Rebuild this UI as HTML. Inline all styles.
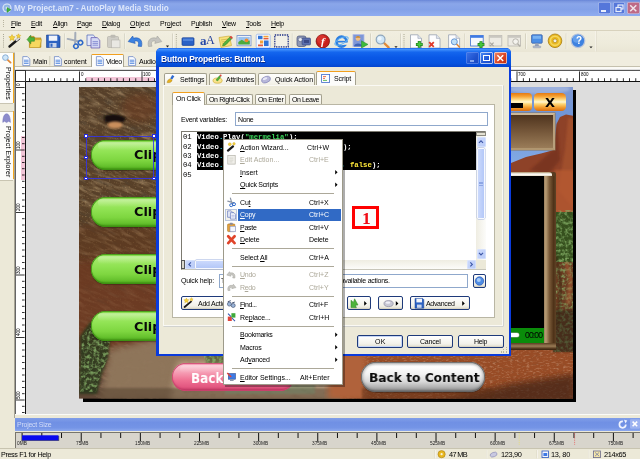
<!DOCTYPE html>
<html lang="en"><head><meta charset="utf-8"><title>AutoPlay Media Studio</title>
<style>
html,body{margin:0;padding:0}
body{width:640px;height:459px;overflow:hidden;position:relative;background:#ECE9D8;font-family:"Liberation Sans",sans-serif;font-size:7px;color:#000}
div,span.t,svg{position:absolute}
span.t{white-space:nowrap;display:block;will-change:transform}
u{text-decoration-thickness:0.6px;text-underline-offset:0.6px}
</style></head><body>

<div style="left:0px;top:0px;width:640px;height:15.6px;background:linear-gradient(#6886D8 0%,#7C98E0 10%,#8AA6EA 24%,#83A1E8 60%,#8FACF0 100%)"></div>
<svg style="left:2px;top:3.4px" width="10" height="10" viewBox="0 0 10 10"><circle cx="5" cy="5" r="4.6" fill="#dfe8f6"/><circle cx="5" cy="5" r="3.4" fill="#8fb4e4"/><circle cx="5" cy="5" r="1.3" fill="#eef2fa"/><path d="M5 4.4 L9 6.8 L5 9.4Z" fill="#3fb53a" stroke="#1f7f22" stroke-width=".4"/></svg>
<span class="t" style="left:13.5px;top:3.97px;height:10.66px;line-height:10.66px;font-size:8.2px;color:#DCE6FA;font-weight:bold;letter-spacing:-0.026px;">My Project.am7 - AutoPlay Media Studio</span>
<div style="left:598px;top:1.5px;width:12.5px;height:12.5px;background:linear-gradient(135deg,#5577DA,#5577DA);border-radius:2px;box-shadow:inset 0 0 0 0.6px #c8d4f4"></div>
<div style="left:612.5px;top:1.5px;width:12.5px;height:12.5px;background:linear-gradient(135deg,#5577DA,#5577DA);border-radius:2px;box-shadow:inset 0 0 0 0.6px #c8d4f4"></div>
<div style="left:627px;top:1.5px;width:12.5px;height:12.5px;background:linear-gradient(135deg,#BE6A86,#BE6A86);border-radius:2px;box-shadow:inset 0 0 0 0.6px #c8d4f4"></div>
<div style="left:601px;top:10px;width:5px;height:1.6px;background:#e8eefc"></div>
<svg style="left:612.5px;top:1.5px" width="12.5" height="12.5" viewBox="0 0 12.5 12.5"><rect x="5" y="3" width="5" height="4" fill="none" stroke="#e8eefc" stroke-width="1.2"/><rect x="3" y="5.5" width="5" height="4" fill="#5577DA" stroke="#e8eefc" stroke-width="1.2"/></svg>
<svg style="left:627px;top:1.5px" width="12.5" height="12.5" viewBox="0 0 12.5 12.5"><path d="M3.2 3.2 L9.3 9.3 M9.3 3.2 L3.2 9.3" stroke="#f0e4ea" stroke-width="1.5"/></svg>
<div style="left:0px;top:15.6px;width:640px;height:14.4px;background:#EFECDE"></div>
<div style="left:0px;top:30px;width:640px;height:0.7px;background:#D8D2BD"></div>
<div style="left:3px;top:19.5px;width:1px;height:1px;background:#B8B4A0"></div>
<div style="left:3px;top:21.7px;width:1px;height:1px;background:#B8B4A0"></div>
<div style="left:3px;top:23.9px;width:1px;height:1px;background:#B8B4A0"></div>
<div style="left:3px;top:26.1px;width:1px;height:1px;background:#B8B4A0"></div>
<span class="t" style="left:11px;top:19.15px;height:9.1px;line-height:9.1px;font-size:7px;color:#000;letter-spacing:-0.320px;"><u>F</u>ile</span>
<span class="t" style="left:31px;top:19.15px;height:9.1px;line-height:9.1px;font-size:7px;color:#000;letter-spacing:-0.328px;"><u>E</u>dit</span>
<span class="t" style="left:52.5px;top:19.15px;height:9.1px;line-height:9.1px;font-size:7px;color:#000;letter-spacing:-0.213px;"><u>A</u>lign</span>
<span class="t" style="left:77px;top:19.15px;height:9.1px;line-height:9.1px;font-size:7px;color:#000;letter-spacing:-0.337px;"><u>P</u>age</span>
<span class="t" style="left:102px;top:19.15px;height:9.1px;line-height:9.1px;font-size:7px;color:#000;letter-spacing:-0.308px;"><u>D</u>ialog</span>
<span class="t" style="left:130px;top:19.15px;height:9.1px;line-height:9.1px;font-size:7px;color:#000;letter-spacing:-0.039px;"><u>O</u>bject</span>
<span class="t" style="left:159.5px;top:19.15px;height:9.1px;line-height:9.1px;font-size:7px;color:#000;letter-spacing:-0.112px;">Pr<u>o</u>ject</span>
<span class="t" style="left:191px;top:19.15px;height:9.1px;line-height:9.1px;font-size:7px;color:#000;letter-spacing:-0.280px;">P<u>u</u>blish</span>
<span class="t" style="left:222px;top:19.15px;height:9.1px;line-height:9.1px;font-size:7px;color:#000;letter-spacing:-0.324px;"><u>V</u>iew</span>
<span class="t" style="left:245.75px;top:19.15px;height:9.1px;line-height:9.1px;font-size:7px;color:#000;letter-spacing:-0.268px;"><u>T</u>ools</span>
<span class="t" style="left:271px;top:19.15px;height:9.1px;line-height:9.1px;font-size:7px;color:#000;letter-spacing:-0.412px;"><u>H</u>elp</span>
<div style="left:0px;top:30.7px;width:640px;height:21.4px;background:linear-gradient(#F1EEE0,#EEEBDB 60%,#EAE6D5)"></div>
<div style="left:0px;top:51.6px;width:640px;height:0.8px;background:#D2CEBB"></div>
<svg style="left:0;top:0" width="640" height="459" viewBox="0 0 640 459"><rect x="3" y="34.0" width="1" height="1" fill="#A9A693"/><rect x="3" y="36.1" width="1" height="1" fill="#A9A693"/><rect x="3" y="38.2" width="1" height="1" fill="#A9A693"/><rect x="3" y="40.3" width="1" height="1" fill="#A9A693"/><rect x="3" y="42.4" width="1" height="1" fill="#A9A693"/><rect x="3" y="44.5" width="1" height="1" fill="#A9A693"/><rect x="3" y="46.6" width="1" height="1" fill="#A9A693"/><path d="M9.5 46.5 L19 38.5" stroke="#1a1a1a" stroke-width="2.4" stroke-linecap="round"/><path d="M16.5 40.2 L19.4 37.8" stroke="#ddd" stroke-width="2" stroke-linecap="round"/><path d="M12 34.5 l1 2 l2.2 .3 l-1.6 1.5 l.4 2.2 l-2-1.1 l-2 1.1 l.4-2.2 l-1.6-1.5 l2.2-.3z" fill="#F4D23C" stroke="#C79A10" stroke-width=".4"/><path d="M18.5 33.8 l.7 1.4 l1.6 .2 l-1.1 1.1 l.3 1.6 l-1.5-.8 l-1.4 .8 l.3-1.6 l-1.2-1.1 l1.6-.2z" fill="#F4D23C" stroke="#C79A10" stroke-width=".4"/><path d="M29.4 36.4 h4.6 l1.3 1.5 h5.6 v9.4 h-11.5z" fill="#DDAA28" stroke="#A87C10" stroke-width=".6"/><path d="M31.4 39.6 h10 l-1.6 7.9 h-10.4z" fill="#F6D860" stroke="#B88E1C" stroke-width=".5"/><path d="M27 39.6 l3.8-4.4 v2.4 h3.6 v3.6 h-3.6 v2.6z" fill="#4DB33B" stroke="#2B7E22" stroke-width=".5"/><path d="M46.5 35 h12 l1.5 1.5 v11 h-13.5z" fill="#2C62C2" stroke="#173E8E" stroke-width=".6"/><rect x="48.8" y="35.6" width="8.5" height="5.2" fill="#F1F4FA"/><rect x="49.5" y="43" width="7" height="4.4" fill="#C9D4EA"/><rect x="50.5" y="43.6" width="2" height="3.2" fill="#2C62C2"/><rect x="64.1" y="33.5" width="0.7" height="15.5" fill="#C5C2B0"/><rect x="64.8" y="33.5" width="0.6" height="15.5" fill="#FBFAF4"/><g transform="rotate(-38 75.5 41)"><path d="M70.6 34.5 L77.6 43 M80.4 34.5 L73.4 43" stroke="#A4ACB8" stroke-width="2" stroke-linecap="round"/><circle cx="72.6" cy="45.4" r="2.2" fill="none" stroke="#2E68C8" stroke-width="1.5"/><circle cx="78.4" cy="45.4" r="2.2" fill="none" stroke="#2E68C8" stroke-width="1.5"/></g><path d="M87 35 h6.2 l2.4 2.4 v8.2 h-8.6z" fill="#E4E8F8" stroke="#4C61B4" stroke-width=".7"/><path d="M91 37.6 h6.2 l2.6 2.6 v7.8 h-8.8z" fill="#D4D8F4" stroke="#5B4FA8" stroke-width=".7"/><path d="M92.6 41.6 h5.4 M92.6 43.4 h5.4 M92.6 45.2 h5.4" stroke="#6F76C8" stroke-width=".7"/><rect x="107.5" y="36.5" width="11" height="11" rx="1" fill="#CFCDC6" stroke="#AEACA4" stroke-width=".6"/><rect x="110.5" y="34.8" width="5" height="3" rx="1" fill="#BDBBB3"/><rect x="111.5" y="40" width="8.5" height="7.8" fill="#E9E8E3" stroke="#B4B2AB" stroke-width=".6"/><rect x="124.1" y="33.5" width="0.7" height="15.5" fill="#C5C2B0"/><rect x="124.8" y="33.5" width="0.6" height="15.5" fill="#FBFAF4"/><path d="M141.5 46.5 c1.5-6 -2-10 -8-8.2 l-.8-2.3 l-4.5 5.6 l7 1.8 l-.7-2.2 c3.5-1 5 1.2 3.5 5z" fill="#3C82E0" stroke="#1E56B4" stroke-width=".6"/><path d="M148.5 46.5 c-1.5-6 2-10 8-8.2 l.8-2.3 l4.5 5.6 l-7 1.8 l.7-2.2 c-3.5-1 -5 1.2 -3.5 5z" fill="#C4C3BE" stroke="#A3A29C" stroke-width=".6"/><path d="M165.9 45.6 h3.2 l-1.6 1.8z" fill="#222"/><rect x="172.2" y="33.5" width="0.7" height="15.5" fill="#C5C2B0"/><rect x="172.9" y="33.5" width="0.6" height="15.5" fill="#FBFAF4"/><rect x="175.8" y="34.0" width="1" height="1" fill="#A9A693"/><rect x="175.8" y="36.1" width="1" height="1" fill="#A9A693"/><rect x="175.8" y="38.2" width="1" height="1" fill="#A9A693"/><rect x="175.8" y="40.3" width="1" height="1" fill="#A9A693"/><rect x="175.8" y="42.4" width="1" height="1" fill="#A9A693"/><rect x="175.8" y="44.5" width="1" height="1" fill="#A9A693"/><rect x="175.8" y="46.6" width="1" height="1" fill="#A9A693"/><rect x="182" y="37.8" width="12" height="7.6" rx=".8" fill="#2A62C6" stroke="#173F94" stroke-width=".7"/><rect x="183" y="38.6" width="10" height="2.4" fill="#5E91E4" opacity=".7"/><path d="M219 37.5 l10.5-1.5 l2 9.5 l-10.5 2z" fill="#F7E27C" stroke="#C9A528" stroke-width=".6"/><path d="M221 40 l7-1 M221.5 42 l7-1 M222 44 l6-1" stroke="#B9982A" stroke-width=".5"/><path d="M222.5 46 l1-2.6 l7-7 l1.8 1.8 l-7 7z" fill="#52B33E" stroke="#2C7D25" stroke-width=".5"/><path d="M229.6 37.2 l1.4-1.4 l1.8 1.8 l-1.4 1.4z" fill="#E0443A"/><rect x="237" y="35.6" width="14" height="10.2" fill="#F4F6FA" stroke="#6C8CCB" stroke-width=".8"/><rect x="238.3" y="36.9" width="11.4" height="7.6" fill="#9CC3EE"/><path d="M238.3 44.5 v-2.5 l3.5-2.2 l3 1.8 l5-1 v3.9z" fill="#4DAA3B"/><circle cx="246.5" cy="40.3" r="1.9" fill="#F08A2C"/><rect x="256.2" y="34.2" width="14" height="13.8" rx="1.5" fill="#F6F8FD" stroke="#9DB7E8" stroke-width=".8"/><rect x="258" y="35.8" width="4.5" height="3.4" fill="#2F74D8"/><rect x="263.5" y="35.8" width="5" height="1.6" fill="#F2A13A"/><rect x="263.5" y="38" width="5" height="1.4" fill="#E45B3A"/><rect x="260" y="40.5" width="3.2" height="3" fill="#F2A13A"/><rect x="264" y="40.5" width="4.6" height="5.6" fill="#2F74D8"/><rect x="258" y="44.5" width="5" height="1.8" fill="#E45B3A"/><rect x="274.8" y="35" width="13.4" height="11.8" fill="#F2F0E6" stroke="#1E2F86" stroke-width="1.3" stroke-dasharray="1.4 1"/><rect x="291.90000000000003" y="33.5" width="0.7" height="15.5" fill="#C5C2B0"/><rect x="292.6" y="33.5" width="0.6" height="15.5" fill="#FBFAF4"/><rect x="297" y="36" width="9" height="10.5" rx="2" fill="#8D97B5" stroke="#4A5478" stroke-width=".7"/><rect x="302" y="38" width="8.5" height="7" rx="1" fill="#5C6FAE" stroke="#39467A" stroke-width=".6"/><circle cx="300.3" cy="39.6" r="2" fill="#E6EAF4" stroke="#4A5478" stroke-width=".5"/><rect x="304" y="40" width="5" height="3" fill="#3C4A86"/><circle cx="322.8" cy="41.2" r="6.7" fill="#C8201C" stroke="#7C1010" stroke-width=".8"/><circle cx="321.5" cy="39.5" r="4.5" fill="#E4443A" opacity=".55"/><circle cx="341.5" cy="41.6" r="5" fill="none" stroke="#2D7FE0" stroke-width="2.6"/><rect x="338" y="40.8" width="8" height="1.7" fill="#2D7FE0"/><rect x="343" y="42.6" width="5" height="2.2" fill="#EFECDE"/><ellipse cx="341.5" cy="41" rx="7.4" ry="3" fill="none" stroke="#5FB0F4" stroke-width="1" transform="rotate(-28 341.5 41)"/><rect x="353" y="34.6" width="11" height="12" fill="#7E97D8" stroke="#AEBBE6" stroke-width=".8"/><circle cx="358" cy="38.6" r="2.4" fill="#EDBE8A"/><path d="M355.5 37.8 a2.6 2.6 0 0 1 5 0 l-.6-.1 l-3.8 0z" fill="#C9862A"/><path d="M354 46.4 c0-4 8-4 8 0z" fill="#3E63B4"/><path d="M361.5 40.8 l6.5 3.6 l-6.5 3.6z" fill="#3DBB3A" stroke="#24872A" stroke-width=".5"/><rect x="370.20000000000005" y="33.5" width="0.7" height="15.5" fill="#C5C2B0"/><rect x="370.90000000000003" y="33.5" width="0.6" height="15.5" fill="#FBFAF4"/><path d="M384 43 L388.6 47.4" stroke="#E08A3A" stroke-width="2.4" stroke-linecap="round"/><circle cx="380.6" cy="39.6" r="4.4" fill="#CFE6F8" stroke="#8FA6BC" stroke-width="1.2"/><circle cx="379.6" cy="38.6" r="2" fill="#F4FAFE" opacity=".8"/><path d="M394.4 46.2 h3.2 l-1.6 1.8z" fill="#222"/><rect x="400.20000000000005" y="33.5" width="0.7" height="15.5" fill="#C5C2B0"/><rect x="400.90000000000003" y="33.5" width="0.6" height="15.5" fill="#FBFAF4"/><rect x="403.5" y="34.0" width="1" height="1" fill="#A9A693"/><rect x="403.5" y="36.1" width="1" height="1" fill="#A9A693"/><rect x="403.5" y="38.2" width="1" height="1" fill="#A9A693"/><rect x="403.5" y="40.3" width="1" height="1" fill="#A9A693"/><rect x="403.5" y="42.4" width="1" height="1" fill="#A9A693"/><rect x="403.5" y="44.5" width="1" height="1" fill="#A9A693"/><rect x="403.5" y="46.6" width="1" height="1" fill="#A9A693"/><path d="M410.5 34.8 h7.4 l3.6 3.6 v9.6 h-11z" fill="#FDFDFE" stroke="#8D96A8" stroke-width=".7"/><path d="M417.9 34.8 v3.6 h3.6" fill="#DDE2EC" stroke="#8D96A8" stroke-width=".5"/><path d="M415.90000000000003 44.4 h6.8 M419.3 41.0 v6.8" stroke="#1E7B1C" stroke-width="3"/><path d="M416.5 44.4 h5.6 M419.3 41.6 v5.6" stroke="#47C83C" stroke-width="1.7"/><path d="M429 34.8 h7.4 l3.6 3.6 v9.6 h-11z" fill="#FDFDFE" stroke="#8D96A8" stroke-width=".7"/><path d="M436.4 34.8 v3.6 h3.6" fill="#DDE2EC" stroke="#8D96A8" stroke-width=".5"/><path d="M429.2 42.2 l4.6 4.6 M433.8 42.2 l-4.6 4.6" stroke="#E03A2C" stroke-width="1.8"/><path d="M448.6 34.8 h7.4 l3.6 3.6 v9.6 h-11z" fill="#FDFDFE" stroke="#8D96A8" stroke-width=".7"/><path d="M456.0 34.8 v3.6 h3.6" fill="#DDE2EC" stroke="#8D96A8" stroke-width=".5"/><path d="M456.5 44 L459.4 47" stroke="#E08A3A" stroke-width="1.6" stroke-linecap="round"/><circle cx="454.3" cy="41.8" r="3" fill="#BFE0F8" stroke="#5B8FD0" stroke-width=".9"/><rect x="464.6" y="33.5" width="0.7" height="15.5" fill="#C5C2B0"/><rect x="465.3" y="33.5" width="0.6" height="15.5" fill="#FBFAF4"/><rect x="470.6" y="35.4" width="12.6" height="10.6" fill="#F6F8FD" stroke="#3E6FD0" stroke-width=".8"/><rect x="470.6" y="35.4" width="12.6" height="2.4" fill="#3E7AE4"/><path d="M477.6 44.6 h6.8 M481 41.2 v6.8" stroke="#1E7B1C" stroke-width="3"/><path d="M478.2 44.6 h5.6 M481 41.800000000000004 v5.6" stroke="#47C83C" stroke-width="1.7"/><rect x="489.2" y="35.4" width="12.6" height="10.6" fill="#EDEBE4" stroke="#B8B6AE" stroke-width=".8"/><rect x="489.2" y="35.4" width="12.6" height="2.4" fill="#C9C7C0"/><path d="M490 42.6 l3.6 3.6 M493.6 42.6 l-3.6 3.6" stroke="#A9A7A0" stroke-width="1.2"/><rect x="508" y="35.4" width="12.6" height="10.6" fill="#EDEBE4" stroke="#B8B6AE" stroke-width=".8"/><rect x="508" y="35.4" width="12.6" height="2.4" fill="#C9C7C0"/><circle cx="515.6" cy="41.6" r="2.8" fill="#F4F3EE" stroke="#B0AEA6" stroke-width=".9"/><path d="M517.6 43.8 l2.6 2.8" stroke="#B0AEA6" stroke-width="1.4"/><rect x="525.4" y="33.5" width="0.7" height="15.5" fill="#C5C2B0"/><rect x="526.0999999999999" y="33.5" width="0.6" height="15.5" fill="#FBFAF4"/><rect x="531.6" y="34.8" width="10.6" height="8.4" rx=".8" fill="#4B8FE6" stroke="#3A5FA8" stroke-width=".8"/><rect x="532.8" y="35.8" width="8.2" height="3" fill="#8CC0F6" opacity=".7"/><path d="M535.4 43.4 h3 l.6 2.6 h-4.2z" fill="#9AA4B8"/><rect x="533" y="46" width="7.8" height="1.8" rx=".8" fill="#B8C0D0" stroke="#7C869C" stroke-width=".4"/><circle cx="555" cy="40.8" r="6.8" fill="#E9B820" stroke="#A87C0C" stroke-width=".8"/><circle cx="555" cy="40.8" r="4.6" fill="none" stroke="#F8DE6C" stroke-width="1.6" opacity=".8"/><circle cx="555" cy="40.8" r="1.9" fill="#F2F0E6" stroke="#A87C0C" stroke-width=".6"/><rect x="565.8000000000001" y="33.5" width="0.7" height="15.5" fill="#C5C2B0"/><rect x="566.5" y="33.5" width="0.6" height="15.5" fill="#FBFAF4"/><circle cx="578" cy="40.8" r="6.8" fill="#3E82E0" stroke="#B8C4DA" stroke-width="1.2"/><circle cx="576.8" cy="38.8" r="4" fill="#7DB2F4" opacity=".6"/><path d="M589.4 46.4 h3.2 l-1.6 1.8z" fill="#222"/><rect x="595.4" y="31" width=".7" height="20.4" fill="#F8F6EE"/><rect x="596.1" y="31" width=".6" height="20.4" fill="#DDD9C8"/></svg>
<span class="t" style="left:200.3px;top:33.35px;height:16.9px;line-height:16.9px;font-size:13px;color:#2448A8;font-weight:bold;font-family:'Liberation Serif',serif;">a</span>
<span class="t" style="left:205.6px;top:32.8px;height:15.6px;line-height:15.6px;font-size:12px;color:#1E3C9A;font-family:'Liberation Serif',serif;">A</span>
<span class="t" style="left:320.8px;top:34.05px;height:14.3px;line-height:14.3px;font-size:11px;color:#fff;font-weight:bold;font-family:'Liberation Serif',serif;font-style:italic;">f</span>
<span class="t" style="left:575.6px;top:34.4px;height:13px;line-height:13px;font-size:10px;color:#fff;font-weight:bold;">?</span>
<div style="left:0px;top:53px;width:14.6px;height:365px;background:#ECE9D8"></div>
<div style="left:0px;top:52.6px;width:13px;height:50.2px;background:#FDFDFB;border-bottom:0.6px solid #C9C5B2"></div>
<div style="left:12.7px;top:53px;width:1.7px;height:49.8px;background:#F4A81E"></div>
<div style="left:0px;top:111px;width:13px;height:68.3px;background:#FDFDFB;border-top:0.6px solid #C9C5B2;border-bottom:0.6px solid #C9C5B2"></div>
<div style="left:12.7px;top:111px;width:1.7px;height:68.3px;background:#F4A81E"></div>
<div style="left:14.4px;top:53px;width:0.9px;height:365px;background:#A8A596"></div>
<svg style="left:0;top:0" width="16" height="200" viewBox="0 0 16 200"><path d="M7.4 59.6 L10.6 62.6" stroke="#E08A3A" stroke-width="1.8" stroke-linecap="round"/><circle cx="5.4" cy="57.6" r="2.8" fill="#CFE6F8" stroke="#7FA6D0" stroke-width=".9"/><path d="M2.8 122.4 c0-5.4 1.6-8.6 3.8-8.6 s3.8 3.2 3.8 8.6 l-1.6 -1.2 l-2.2 1.4 l-2.2 -1.4z" fill="#8C8CCB" stroke="#7474B8" stroke-width=".5"/></svg>
<span class="t" style="left:4.4px;top:66.5px;font-size:7px;line-height:8px;height:8px;transform-origin:0 0;transform:rotate(90deg) translateY(-8px);letter-spacing:0.1px">Properties</span>
<span class="t" style="left:4.4px;top:125.6px;font-size:7px;line-height:8px;height:8px;transform-origin:0 0;transform:rotate(90deg) translateY(-8px);letter-spacing:0.1px">Project Explorer</span>
<div style="left:14.6px;top:52.4px;width:626px;height:17px;background:#F0EDDF"></div>
<div style="left:14.6px;top:66.4px;width:626px;height:0.7px;background:#C5C1AE"></div>
<div style="left:14.6px;top:67.1px;width:626px;height:2.2px;background:#FBFAF6"></div>
<div style="left:90.8px;top:54.4px;width:33px;height:12.8px;background:#FDFDFB;border:0.6px solid #A9A693;border-bottom:none;border-top:1.6px solid #F2A01E;border-radius:1.5px 1.5px 0 0;box-sizing:border-box"></div>
<svg style="left:0;top:0" width="640" height="70" viewBox="0 0 640 70"><path d="M22.8 56.6 h4.6 l2.4 2.4 v6.6 h-7z" fill="#F8FAFE" stroke="#5E7CC0" stroke-width=".7"/><path d="M24.0 60.2 h4.6 M24.0 61.800000000000004 h4.6 M24.0 63.4 h4.6" stroke="#4F86DC" stroke-width=".9"/><path d="M54.4 56.6 h4.6 l2.4 2.4 v6.6 h-7z" fill="#F8FAFE" stroke="#5E7CC0" stroke-width=".7"/><path d="M55.6 60.2 h4.6 M55.6 61.800000000000004 h4.6 M55.6 63.4 h4.6" stroke="#4F86DC" stroke-width=".9"/><path d="M96.4 56.6 h4.6 l2.4 2.4 v6.6 h-7z" fill="#F8FAFE" stroke="#5E7CC0" stroke-width=".7"/><path d="M97.60000000000001 60.2 h4.6 M97.60000000000001 61.800000000000004 h4.6 M97.60000000000001 63.4 h4.6" stroke="#4F86DC" stroke-width=".9"/><path d="M128.6 56.6 h4.6 l2.4 2.4 v6.6 h-7z" fill="#F8FAFE" stroke="#5E7CC0" stroke-width=".7"/><path d="M129.79999999999998 60.2 h4.6 M129.79999999999998 61.800000000000004 h4.6 M129.79999999999998 63.4 h4.6" stroke="#4F86DC" stroke-width=".9"/><path d="M49.8 56 v9.4" stroke="#C2BEAA" stroke-width=".7"/></svg>
<span class="t" style="left:32.8px;top:56.65px;height:9.1px;line-height:9.1px;font-size:7px;color:#000;letter-spacing:-0.268px;">Main</span>
<span class="t" style="left:64px;top:56.65px;height:9.1px;line-height:9.1px;font-size:7px;color:#000;letter-spacing:-0.037px;">content</span>
<span class="t" style="left:105.6px;top:56.65px;height:9.1px;line-height:9.1px;font-size:7px;color:#000;letter-spacing:-0.436px;">Video</span>
<span class="t" style="left:138.6px;top:56.65px;height:9.1px;line-height:9.1px;font-size:7px;color:#000;letter-spacing:-0.281px;">Audio</span>
<div style="left:14.6px;top:69.4px;width:626px;height:344.4px;background:#DDDDDD"></div>
<div style="left:14.6px;top:69.6px;width:626px;height:12.2px;background:#fff;border-top:0.8px solid #555;border-bottom:1px solid #111;box-sizing:border-box"></div>
<div style="left:15.3px;top:69.6px;width:10.3px;height:344.2px;background:#fff;border-left:0.8px solid #666;border-right:1.2px solid #111;box-sizing:border-box"></div>
<div style="left:14.6px;top:69.6px;width:11px;height:12.2px;background:#fff;border:0.8px solid #333;box-sizing:border-box"></div>
<div style="left:86px;top:77.4px;width:68px;height:3.2px;background:#F3C6D8"></div>
<div style="left:20.6px;top:135.5px;width:4px;height:44.5px;background:#F3C6D8"></div>
<svg style="left:0;top:0" width="640" height="459" viewBox="0 0 640 459"><rect x="29.15" y="78.2" width=".8" height="3" fill="#000"/><rect x="35.40" y="78.2" width=".8" height="3" fill="#000"/><rect x="41.65" y="78.2" width=".8" height="3" fill="#000"/><rect x="47.90" y="78.2" width=".8" height="3" fill="#000"/><rect x="54.15" y="78.2" width=".8" height="3" fill="#000"/><rect x="60.40" y="78.2" width=".8" height="3" fill="#000"/><rect x="66.65" y="78.2" width=".8" height="3" fill="#000"/><rect x="72.90" y="78.2" width=".8" height="3" fill="#000"/><rect x="79.10" y="71.4" width=".8" height="9.8" fill="#000"/><rect x="85.40" y="78.2" width=".8" height="3" fill="#000"/><rect x="91.65" y="78.2" width=".8" height="3" fill="#000"/><rect x="97.90" y="78.2" width=".8" height="3" fill="#000"/><rect x="104.15" y="78.2" width=".8" height="3" fill="#000"/><rect x="110.40" y="78.2" width=".8" height="3" fill="#000"/><rect x="116.65" y="78.2" width=".8" height="3" fill="#000"/><rect x="122.90" y="78.2" width=".8" height="3" fill="#000"/><rect x="129.15" y="78.2" width=".8" height="3" fill="#000"/><rect x="135.40" y="78.2" width=".8" height="3" fill="#000"/><rect x="141.60" y="71.4" width=".8" height="9.8" fill="#000"/><rect x="147.90" y="78.2" width=".8" height="3" fill="#000"/><rect x="154.15" y="78.2" width=".8" height="3" fill="#000"/><rect x="160.40" y="78.2" width=".8" height="3" fill="#000"/><rect x="166.65" y="78.2" width=".8" height="3" fill="#000"/><rect x="172.90" y="78.2" width=".8" height="3" fill="#000"/><rect x="179.15" y="78.2" width=".8" height="3" fill="#000"/><rect x="185.40" y="78.2" width=".8" height="3" fill="#000"/><rect x="191.65" y="78.2" width=".8" height="3" fill="#000"/><rect x="197.90" y="78.2" width=".8" height="3" fill="#000"/><rect x="204.10" y="71.4" width=".8" height="9.8" fill="#000"/><rect x="210.40" y="78.2" width=".8" height="3" fill="#000"/><rect x="216.65" y="78.2" width=".8" height="3" fill="#000"/><rect x="222.90" y="78.2" width=".8" height="3" fill="#000"/><rect x="229.15" y="78.2" width=".8" height="3" fill="#000"/><rect x="235.40" y="78.2" width=".8" height="3" fill="#000"/><rect x="241.65" y="78.2" width=".8" height="3" fill="#000"/><rect x="247.90" y="78.2" width=".8" height="3" fill="#000"/><rect x="254.15" y="78.2" width=".8" height="3" fill="#000"/><rect x="260.40" y="78.2" width=".8" height="3" fill="#000"/><rect x="266.60" y="71.4" width=".8" height="9.8" fill="#000"/><rect x="272.90" y="78.2" width=".8" height="3" fill="#000"/><rect x="279.15" y="78.2" width=".8" height="3" fill="#000"/><rect x="285.40" y="78.2" width=".8" height="3" fill="#000"/><rect x="291.65" y="78.2" width=".8" height="3" fill="#000"/><rect x="297.90" y="78.2" width=".8" height="3" fill="#000"/><rect x="304.15" y="78.2" width=".8" height="3" fill="#000"/><rect x="310.40" y="78.2" width=".8" height="3" fill="#000"/><rect x="316.65" y="78.2" width=".8" height="3" fill="#000"/><rect x="322.90" y="78.2" width=".8" height="3" fill="#000"/><rect x="329.10" y="71.4" width=".8" height="9.8" fill="#000"/><rect x="335.40" y="78.2" width=".8" height="3" fill="#000"/><rect x="341.65" y="78.2" width=".8" height="3" fill="#000"/><rect x="347.90" y="78.2" width=".8" height="3" fill="#000"/><rect x="354.15" y="78.2" width=".8" height="3" fill="#000"/><rect x="360.40" y="78.2" width=".8" height="3" fill="#000"/><rect x="366.65" y="78.2" width=".8" height="3" fill="#000"/><rect x="372.90" y="78.2" width=".8" height="3" fill="#000"/><rect x="379.15" y="78.2" width=".8" height="3" fill="#000"/><rect x="385.40" y="78.2" width=".8" height="3" fill="#000"/><rect x="391.60" y="71.4" width=".8" height="9.8" fill="#000"/><rect x="397.90" y="78.2" width=".8" height="3" fill="#000"/><rect x="404.15" y="78.2" width=".8" height="3" fill="#000"/><rect x="410.40" y="78.2" width=".8" height="3" fill="#000"/><rect x="416.65" y="78.2" width=".8" height="3" fill="#000"/><rect x="422.90" y="78.2" width=".8" height="3" fill="#000"/><rect x="429.15" y="78.2" width=".8" height="3" fill="#000"/><rect x="435.40" y="78.2" width=".8" height="3" fill="#000"/><rect x="441.65" y="78.2" width=".8" height="3" fill="#000"/><rect x="447.90" y="78.2" width=".8" height="3" fill="#000"/><rect x="454.10" y="71.4" width=".8" height="9.8" fill="#000"/><rect x="460.40" y="78.2" width=".8" height="3" fill="#000"/><rect x="466.65" y="78.2" width=".8" height="3" fill="#000"/><rect x="472.90" y="78.2" width=".8" height="3" fill="#000"/><rect x="479.15" y="78.2" width=".8" height="3" fill="#000"/><rect x="485.40" y="78.2" width=".8" height="3" fill="#000"/><rect x="491.65" y="78.2" width=".8" height="3" fill="#000"/><rect x="497.90" y="78.2" width=".8" height="3" fill="#000"/><rect x="504.15" y="78.2" width=".8" height="3" fill="#000"/><rect x="510.40" y="78.2" width=".8" height="3" fill="#000"/><rect x="516.60" y="71.4" width=".8" height="9.8" fill="#000"/><rect x="522.90" y="78.2" width=".8" height="3" fill="#000"/><rect x="529.15" y="78.2" width=".8" height="3" fill="#000"/><rect x="535.40" y="78.2" width=".8" height="3" fill="#000"/><rect x="541.65" y="78.2" width=".8" height="3" fill="#000"/><rect x="547.90" y="78.2" width=".8" height="3" fill="#000"/><rect x="554.15" y="78.2" width=".8" height="3" fill="#000"/><rect x="560.40" y="78.2" width=".8" height="3" fill="#000"/><rect x="566.65" y="78.2" width=".8" height="3" fill="#000"/><rect x="572.90" y="78.2" width=".8" height="3" fill="#000"/><rect x="579.10" y="71.4" width=".8" height="9.8" fill="#000"/><rect x="585.40" y="78.2" width=".8" height="3" fill="#000"/><rect x="591.65" y="78.2" width=".8" height="3" fill="#000"/><rect x="597.90" y="78.2" width=".8" height="3" fill="#000"/><rect x="604.15" y="78.2" width=".8" height="3" fill="#000"/><rect x="610.40" y="78.2" width=".8" height="3" fill="#000"/><rect x="616.65" y="78.2" width=".8" height="3" fill="#000"/><rect x="622.90" y="78.2" width=".8" height="3" fill="#000"/><rect x="629.15" y="78.2" width=".8" height="3" fill="#000"/><rect x="635.40" y="78.2" width=".8" height="3" fill="#000"/><rect x="16" y="87.10" width="8.6" height=".8" fill="#000"/><rect x="22" y="93.35" width="2.6" height=".8" fill="#000"/><rect x="22" y="99.60" width="2.6" height=".8" fill="#000"/><rect x="22" y="105.85" width="2.6" height=".8" fill="#000"/><rect x="22" y="112.10" width="2.6" height=".8" fill="#000"/><rect x="22" y="118.35" width="2.6" height=".8" fill="#000"/><rect x="22" y="124.60" width="2.6" height=".8" fill="#000"/><rect x="22" y="130.85" width="2.6" height=".8" fill="#000"/><rect x="22" y="137.10" width="2.6" height=".8" fill="#000"/><rect x="22" y="143.35" width="2.6" height=".8" fill="#000"/><rect x="16" y="149.60" width="8.6" height=".8" fill="#000"/><rect x="22" y="155.85" width="2.6" height=".8" fill="#000"/><rect x="22" y="162.10" width="2.6" height=".8" fill="#000"/><rect x="22" y="168.35" width="2.6" height=".8" fill="#000"/><rect x="22" y="174.60" width="2.6" height=".8" fill="#000"/><rect x="22" y="180.85" width="2.6" height=".8" fill="#000"/><rect x="22" y="187.10" width="2.6" height=".8" fill="#000"/><rect x="22" y="193.35" width="2.6" height=".8" fill="#000"/><rect x="22" y="199.60" width="2.6" height=".8" fill="#000"/><rect x="22" y="205.85" width="2.6" height=".8" fill="#000"/><rect x="16" y="212.10" width="8.6" height=".8" fill="#000"/><rect x="22" y="218.35" width="2.6" height=".8" fill="#000"/><rect x="22" y="224.60" width="2.6" height=".8" fill="#000"/><rect x="22" y="230.85" width="2.6" height=".8" fill="#000"/><rect x="22" y="237.10" width="2.6" height=".8" fill="#000"/><rect x="22" y="243.35" width="2.6" height=".8" fill="#000"/><rect x="22" y="249.60" width="2.6" height=".8" fill="#000"/><rect x="22" y="255.85" width="2.6" height=".8" fill="#000"/><rect x="22" y="262.10" width="2.6" height=".8" fill="#000"/><rect x="22" y="268.35" width="2.6" height=".8" fill="#000"/><rect x="16" y="274.60" width="8.6" height=".8" fill="#000"/><rect x="22" y="280.85" width="2.6" height=".8" fill="#000"/><rect x="22" y="287.10" width="2.6" height=".8" fill="#000"/><rect x="22" y="293.35" width="2.6" height=".8" fill="#000"/><rect x="22" y="299.60" width="2.6" height=".8" fill="#000"/><rect x="22" y="305.85" width="2.6" height=".8" fill="#000"/><rect x="22" y="312.10" width="2.6" height=".8" fill="#000"/><rect x="22" y="318.35" width="2.6" height=".8" fill="#000"/><rect x="22" y="324.60" width="2.6" height=".8" fill="#000"/><rect x="22" y="330.85" width="2.6" height=".8" fill="#000"/><rect x="16" y="337.10" width="8.6" height=".8" fill="#000"/><rect x="22" y="343.35" width="2.6" height=".8" fill="#000"/><rect x="22" y="349.60" width="2.6" height=".8" fill="#000"/><rect x="22" y="355.85" width="2.6" height=".8" fill="#000"/><rect x="22" y="362.10" width="2.6" height=".8" fill="#000"/><rect x="22" y="368.35" width="2.6" height=".8" fill="#000"/><rect x="22" y="374.60" width="2.6" height=".8" fill="#000"/><rect x="22" y="380.85" width="2.6" height=".8" fill="#000"/><rect x="22" y="387.10" width="2.6" height=".8" fill="#000"/><rect x="22" y="393.35" width="2.6" height=".8" fill="#000"/><rect x="16" y="399.60" width="8.6" height=".8" fill="#000"/><rect x="22" y="405.85" width="2.6" height=".8" fill="#000"/><rect x="22" y="412.10" width="2.6" height=".8" fill="#000"/></svg>
<span class="t" style="left:80.7px;top:72.475px;height:5.85px;line-height:5.85px;font-size:4.5px;color:#000;">0</span>
<span class="t" style="left:143.2px;top:72.475px;height:5.85px;line-height:5.85px;font-size:4.5px;color:#000;">100</span>
<span class="t" style="left:205.7px;top:72.475px;height:5.85px;line-height:5.85px;font-size:4.5px;color:#000;">200</span>
<span class="t" style="left:268.2px;top:72.475px;height:5.85px;line-height:5.85px;font-size:4.5px;color:#000;">300</span>
<span class="t" style="left:330.7px;top:72.475px;height:5.85px;line-height:5.85px;font-size:4.5px;color:#000;">400</span>
<span class="t" style="left:393.2px;top:72.475px;height:5.85px;line-height:5.85px;font-size:4.5px;color:#000;">500</span>
<span class="t" style="left:455.7px;top:72.475px;height:5.85px;line-height:5.85px;font-size:4.5px;color:#000;">600</span>
<span class="t" style="left:518.2px;top:72.475px;height:5.85px;line-height:5.85px;font-size:4.5px;color:#000;">700</span>
<span class="t" style="left:580.7px;top:72.475px;height:5.85px;line-height:5.85px;font-size:4.5px;color:#000;">800</span>
<span class="t" style="left:16.2px;top:86.3px;font-size:4.6px;line-height:5px;height:5px;transform-origin:0 0;transform:rotate(-90deg)">0</span>
<span class="t" style="left:16.2px;top:148.8px;font-size:4.6px;line-height:5px;height:5px;transform-origin:0 0;transform:rotate(-90deg)">100</span>
<span class="t" style="left:16.2px;top:211.3px;font-size:4.6px;line-height:5px;height:5px;transform-origin:0 0;transform:rotate(-90deg)">200</span>
<span class="t" style="left:16.2px;top:273.8px;font-size:4.6px;line-height:5px;height:5px;transform-origin:0 0;transform:rotate(-90deg)">300</span>
<span class="t" style="left:16.2px;top:336.3px;font-size:4.6px;line-height:5px;height:5px;transform-origin:0 0;transform:rotate(-90deg)">400</span>
<span class="t" style="left:16.2px;top:398.8px;font-size:4.6px;line-height:5px;height:5px;transform-origin:0 0;transform:rotate(-90deg)">500</span>
<div style="left:82.5px;top:90px;width:493.6px;height:312.4px;background:#000"></div>
<svg style="left:0;top:0" width="640" height="459" viewBox="0 0 640 459"><defs>
<clipPath id="pg"><rect x="79" y="87" width="494" height="311.6"/></clipPath>
<filter id="rk" x="0" y="0" width="100%" height="100%"><feTurbulence type="fractalNoise" baseFrequency="0.07 0.32" numOctaves="3" seed="7"/><feColorMatrix values="0 0 0 0 .68  0 0 0 0 .5  0 0 0 0 .28  2.8 0 0 0 -1.25"/></filter>
<filter id="rk2" x="0" y="0" width="100%" height="100%"><feTurbulence type="fractalNoise" baseFrequency="0.06 0.25" numOctaves="3" seed="3"/><feColorMatrix values="0 0 0 0 .08  0 0 0 0 .06  0 0 0 0 .04  -2.6 0 0 0 1.2"/></filter>
<filter id="sp" x="0" y="0" width="100%" height="100%"><feTurbulence type="fractalNoise" baseFrequency="0.55" numOctaves="1" seed="21"/><feColorMatrix values="0 0 0 0 .8  0 0 0 0 .56  0 0 0 0 .24  3.4 0 0 0 -2.05"/></filter>
<filter id="dirt" x="0" y="0" width="100%" height="100%"><feTurbulence type="fractalNoise" baseFrequency="0.3 0.6" numOctaves="2" seed="11"/><feColorMatrix values="0 0 0 0 .86  0 0 0 0 .64  0 0 0 0 .48  2.2 0 0 0 -1.1"/></filter>
<filter id="dirt2" x="0" y="0" width="100%" height="100%"><feTurbulence type="fractalNoise" baseFrequency="0.2 0.5" numOctaves="2" seed="4"/><feColorMatrix values="0 0 0 0 .2  0 0 0 0 .1  0 0 0 0 .05  -2.4 0 0 0 1.0"/></filter>
<filter id="leaf" x="-10%" y="-10%" width="120%" height="120%"><feTurbulence type="fractalNoise" baseFrequency="0.32" numOctaves="2" seed="5"/><feColorMatrix values="0 0 0 0 .24  0 0 0 0 .44  0 0 0 0 .14  3 0 0 0 -1.25"/><feComposite in2="SourceGraphic" operator="in"/></filter>
<filter id="tan" x="0" y="0" width="100%" height="100%"><feTurbulence type="fractalNoise" baseFrequency="0.12 0.2" numOctaves="3" seed="9"/><feColorMatrix values="0 0 0 0 .3  0 0 0 0 .2  0 0 0 0 .12  -2.2 0 0 0 1.1"/></filter>
<filter id="bl"><feGaussianBlur stdDeviation="3"/></filter>
<filter id="bl1"><feGaussianBlur stdDeviation="1.2"/></filter>
<linearGradient id="g0" x1="0" y1="0" x2="0" y2="1"><stop offset="0" stop-color="#57402A"/><stop offset=".5" stop-color="#5A4128"/><stop offset=".66" stop-color="#683C26"/><stop offset=".8" stop-color="#6E442C"/><stop offset="1" stop-color="#64483A"/></linearGradient>
<linearGradient id="sky" x1="0" y1="0" x2="0" y2="1"><stop offset="0" stop-color="#8099D2"/><stop offset=".35" stop-color="#6E95D8"/><stop offset="1" stop-color="#88B0E8"/></linearGradient>
</defs><g clip-path="url(#pg)"><rect x="79" y="87" width="494" height="312" fill="url(#g0)"/><g transform="rotate(22 118 200)"><rect x="0" y="30" width="230" height="360" filter="url(#rk)" opacity=".42"/><rect x="0" y="30" width="230" height="360" filter="url(#rk2)" opacity=".7"/></g><rect x="79" y="87" width="90" height="250" filter="url(#sp)" opacity=".4"/><ellipse cx="140" cy="108" rx="18" ry="14" fill="#6E3E20" opacity=".55" filter="url(#bl)"/><path d="M104 116 q10 -5 22 2 l-2 4 q-10 3 -19 0z" fill="#150E08" filter="url(#bl1)"/><ellipse cx="115" cy="125" rx="7.5" ry="3.4" fill="#C98E5C" filter="url(#bl1)"/><rect x="74" y="225" width="100" height="60" fill="#63351E" opacity=".45" filter="url(#bl)"/><rect x="74" y="262" width="100" height="84" fill="#6E3A22" opacity=".72" filter="url(#bl)"/><path d="M100 400 L110 350 L150 340 L240 346 L350 352 L350 400Z" fill="#8E745A" filter="url(#bl)"/><path d="M170 400 L178 362 L300 358 L345 366 L345 400Z" fill="#C6AC8C" filter="url(#bl)" opacity=".9"/><rect x="100" y="340" width="250" height="60" filter="url(#tan)" opacity=".45"/><rect x="79" y="388" width="270" height="12" fill="#5A4634" opacity=".6" filter="url(#bl1)"/><rect x="340" y="350" width="240" height="50" fill="#984C26"/><rect x="340" y="350" width="240" height="50" filter="url(#dirt)" opacity=".42"/><rect x="340" y="350" width="240" height="50" filter="url(#dirt2)" opacity=".5"/><rect x="328" y="352" width="38" height="48" fill="#B0623A" filter="url(#bl)"/><path d="M430 404 L510 384 L575 374 L575 404Z" fill="#3E2412" opacity=".7" filter="url(#bl)"/><rect x="362" y="388" width="130" height="12" fill="#5A2E16" opacity=".5" filter="url(#bl1)"/><path d="M79 394 L80 336 L90 322 L102 326 L110 340 L108 358 L102 374 L97 394Z" fill="#28381A" opacity=".8" filter="url(#bl1)"/><path d="M80 392 L82 336 L92 324 L102 328 L110 340 L108 358 L101 372 L96 392Z" fill="#3E6A2A" filter="url(#leaf)" opacity=".8"/><path d="M206 352 h36 v12 h-36z" fill="#2E4A1E" opacity=".5" filter="url(#bl1)"/><path d="M204 351 h40 v14 h-40z" fill="#4E8A34" filter="url(#leaf)" opacity=".8"/><path d="M225 384 h90 v10 h-90z" fill="#6A8A6A" opacity=".45" filter="url(#bl1)"/><rect x="505" y="87" width="70" height="90" fill="url(#sky)"/><ellipse cx="540" cy="89" rx="30" ry="5" fill="#A9BCE2" opacity=".7" filter="url(#bl1)"/><path d="M575 116 L566 114.5 L560 117 L556.5 124 L554 150 L541 153.5 L526 157 L511 163 L505 165 L505 230 L575 230Z" fill="#8E4228"/><path d="M575 118 L568 118 L565 150 L558 190 L575 210Z" fill="#A8542F" opacity=".7" filter="url(#bl1)"/><path d="M553 150 L557 120 L560 160 L548 175 L530 170Z" fill="#6E2E1C" opacity=".6" filter="url(#bl1)"/><rect x="555" y="170" width="20" height="50" fill="#B85A30" opacity=".75" filter="url(#bl1)"/><rect x="553" y="212" width="22" height="52" fill="#36501E"/><rect x="553" y="210" width="22" height="56" fill="#4A7A2A" filter="url(#leaf)" opacity=".75"/><rect x="553" y="262" width="22" height="90" fill="#6A3C22"/><rect x="553" y="258" width="22" height="94" fill="#2E3A18" filter="url(#leaf)" opacity=".75"/><rect x="553" y="310" width="22" height="42" fill="#2A2012" opacity=".55" filter="url(#bl1)"/><path d="M566 262 l5 18 l-3 24" stroke="#A85A34" stroke-width="4" fill="none" opacity=".6" filter="url(#bl1)"/><path d="M556 255 l5 30 l-3 40" stroke="#3A2612" stroke-width="3" fill="none" opacity=".6" filter="url(#bl1)"/></g></svg>
<div style="left:91px;top:140.1px;width:110px;height:29.6px;border-radius:14.8px;background:linear-gradient(#74CE38 0%,#A6EB6C 12%,#8FE252 42%,#7ED640 68%,#62BE2A 90%,#439814 100%);box-shadow:inset 0 0 0 0.8px #3F9414, inset 0 -1.5px 2px rgba(40,110,0,.45), 0 0.5px 1px rgba(0,0,0,.45)"></div>
<div style="left:98px;top:142.1px;width:96px;height:8px;border-radius:8px;background:linear-gradient(rgba(255,255,255,.35),rgba(255,255,255,0))"></div>
<span class="t" style="left:134.1px;top:147.48px;height:16.64px;line-height:16.64px;font-size:12.8px;color:#0a0a0a;font-weight:bold;font-family:'DejaVu Sans','Liberation Sans',sans-serif;">Clip</span>
<div style="left:91px;top:197.1px;width:110px;height:29.6px;border-radius:14.8px;background:linear-gradient(#74CE38 0%,#A6EB6C 12%,#8FE252 42%,#7ED640 68%,#62BE2A 90%,#439814 100%);box-shadow:inset 0 0 0 0.8px #3F9414, inset 0 -1.5px 2px rgba(40,110,0,.45), 0 0.5px 1px rgba(0,0,0,.45)"></div>
<div style="left:98px;top:199.1px;width:96px;height:8px;border-radius:8px;background:linear-gradient(rgba(255,255,255,.35),rgba(255,255,255,0))"></div>
<span class="t" style="left:134.1px;top:204.48px;height:16.64px;line-height:16.64px;font-size:12.8px;color:#0a0a0a;font-weight:bold;font-family:'DejaVu Sans','Liberation Sans',sans-serif;">Clip</span>
<div style="left:91px;top:254.2px;width:110px;height:29.6px;border-radius:14.8px;background:linear-gradient(#74CE38 0%,#A6EB6C 12%,#8FE252 42%,#7ED640 68%,#62BE2A 90%,#439814 100%);box-shadow:inset 0 0 0 0.8px #3F9414, inset 0 -1.5px 2px rgba(40,110,0,.45), 0 0.5px 1px rgba(0,0,0,.45)"></div>
<div style="left:98px;top:256.2px;width:96px;height:8px;border-radius:8px;background:linear-gradient(rgba(255,255,255,.35),rgba(255,255,255,0))"></div>
<span class="t" style="left:134.1px;top:261.58px;height:16.64px;line-height:16.64px;font-size:12.8px;color:#0a0a0a;font-weight:bold;font-family:'DejaVu Sans','Liberation Sans',sans-serif;">Clip</span>
<div style="left:91px;top:311.2px;width:110px;height:29.6px;border-radius:14.8px;background:linear-gradient(#74CE38 0%,#A6EB6C 12%,#8FE252 42%,#7ED640 68%,#62BE2A 90%,#439814 100%);box-shadow:inset 0 0 0 0.8px #3F9414, inset 0 -1.5px 2px rgba(40,110,0,.45), 0 0.5px 1px rgba(0,0,0,.45)"></div>
<div style="left:98px;top:313.2px;width:96px;height:8px;border-radius:8px;background:linear-gradient(rgba(255,255,255,.35),rgba(255,255,255,0))"></div>
<span class="t" style="left:134.1px;top:318.58px;height:16.64px;line-height:16.64px;font-size:12.8px;color:#0a0a0a;font-weight:bold;font-family:'DejaVu Sans','Liberation Sans',sans-serif;">Clip</span>
<div style="left:86px;top:136px;width:68px;height:42.8px;border:0.7px solid rgba(50,50,235,.85);box-sizing:border-box"></div>
<div style="left:84.3px;top:134.3px;width:3.8px;height:3.8px;background:#fff;border:0.7px solid #2A2AD8;box-sizing:border-box"></div>
<div style="left:151.9px;top:134.3px;width:3.8px;height:3.8px;background:#fff;border:0.7px solid #2A2AD8;box-sizing:border-box"></div>
<div style="left:84.3px;top:155.5px;width:3.8px;height:3.8px;background:#fff;border:0.7px solid #2A2AD8;box-sizing:border-box"></div>
<div style="left:84.3px;top:176.7px;width:3.8px;height:3.8px;background:#fff;border:0.7px solid #2A2AD8;box-sizing:border-box"></div>
<div style="left:151.9px;top:176.7px;width:3.8px;height:3.8px;background:#fff;border:0.7px solid #2A2AD8;box-sizing:border-box"></div>
<div style="left:171.8px;top:363.4px;width:122.2px;height:27.8px;border-radius:13.9px;background:linear-gradient(#EE7A98 0%,#FAC2D0 10%,#F6A0B6 32%,#EF7092 62%,#E25680 86%,#C43A64 100%);box-shadow:inset 0 0 0 0.8px #CC4870, inset 0 -1.5px 2px rgba(150,20,70,.4)"></div>
<div style="left:180px;top:365.4px;width:106px;height:7.5px;border-radius:7px;background:linear-gradient(rgba(255,255,255,.3),rgba(255,255,255,0))"></div>
<span class="t" style="left:190.8px;top:369.82px;height:17.16px;line-height:17.16px;font-size:13.2px;color:#fff;font-weight:bold;font-family:'DejaVu Sans','Liberation Sans',sans-serif;transform-origin:0 50%;transform:scaleX(0.9108);">Back</span>
<div style="left:361.2px;top:362.1px;width:123.4px;height:29.8px;border-radius:14.9px;background:linear-gradient(#D8D8D8 0%,#FFFFFF 14%,#F2F2F2 40%,#D8D8D8 66%,#A4A4A4 90%,#7A7A7A 100%);box-shadow:inset 0 0 0 0.8px #686868, inset 0 0 3.5px 1px rgba(0,0,0,.45), 0 0.5px 1px rgba(0,0,0,.5)"></div>
<span class="t" style="left:368.8px;top:370.41px;height:16.38px;line-height:16.38px;font-size:12.6px;color:#0a0a0a;font-weight:bold;font-family:'DejaVu Sans','Liberation Sans',sans-serif;transform-origin:0 50%;transform:scaleX(0.9715);">Back to Content</span>
<div style="left:498px;top:93px;width:34px;height:18px;border-radius:4px;background:linear-gradient(#E27A16 0%,#F6A030 18%,#FFE9A0 42%,#FFF6D0 50%,#FFD978 60%,#F29A2A 82%,#D86E10 100%)"></div>
<div style="left:534px;top:93px;width:32.4px;height:18px;border-radius:4.5px;background:linear-gradient(#E27A16 0%,#F6A030 18%,#FFE9A0 42%,#FFF6D0 50%,#FFD978 60%,#F29A2A 82%,#D86E10 100%)"></div>
<div style="left:504px;top:103px;width:19px;height:5px;background:#000"></div>
<span class="t" style="left:545.2px;top:94.95px;height:16.9px;line-height:16.9px;font-size:13px;color:#000;font-weight:bold;font-family:'DejaVu Sans','Liberation Sans',sans-serif;">X</span>
<div style="left:420px;top:112.6px;width:135.4px;height:37.2px;background:linear-gradient(#4E341E,#6E5034 40%,#9A7C58 100%);border:2.4px solid;border-color:#CDB898 #B8A07C #B09670 #C6B08E;box-sizing:border-box;box-shadow:0 0 0 0.5px #8A7454"></div>
<div style="left:380px;top:172.4px;width:175.6px;height:177.6px;background:#5A3C20;border-radius:2px"></div>
<div style="left:380px;top:172.4px;width:172px;height:3.6px;background:linear-gradient(#A88A60,#FFFFFF 50%,#E6DCC8);border-radius:2px 3px 0 0"></div>
<div style="left:544.4px;top:176px;width:11.2px;height:172px;background:linear-gradient(90deg,#9A8060,#B89C74 15%,#7A5A38 45%,#4E3218 80%,#5E4226)"></div>
<div style="left:380px;top:342.8px;width:175.6px;height:7.2px;background:linear-gradient(#5A3E22,#9A7C56 45%,#4A2E16 85%,#3A220E)"></div>
<div style="left:380px;top:176px;width:164.4px;height:167px;background:#000"></div>
<div style="left:380px;top:327.8px;width:164.4px;height:15px;background:#0A8C0A"></div>
<div style="left:504px;top:333.1px;width:15.4px;height:4.2px;background:#fff;border-radius:2.1px;box-shadow:0 0 0 0.5px #8a9a8a"></div>
<span class="t" style="left:525.4px;top:329.61px;height:11.18px;line-height:11.18px;font-size:8.6px;color:#000;letter-spacing:-0.864px;">00:00</span>
<div style="left:156.2px;top:48px;width:354.8px;height:308.4px;background:#0A3BDC;border-radius:5px 5px 0 0"></div>
<div style="left:156.2px;top:48px;width:354.8px;height:18.8px;border-radius:5px 5px 0 0;background:linear-gradient(#1E63E8 0%,#3F8FFC 8%,#1466EE 22%,#0A58E6 50%,#0653E0 80%,#0445CE 100%)"></div>
<div style="left:158.6px;top:66.8px;width:350px;height:287.2px;background:#ECE9D8"></div>
<span class="t" style="left:160.8px;top:53.575px;height:11.05px;line-height:11.05px;font-size:8.5px;color:#fff;font-weight:bold;letter-spacing:-0.195px;text-shadow:0.5px 0.5px 0 #0A2A8A;">Button Properties: Button1</span>
<div style="left:466.3px;top:51.8px;width:12.4px;height:12.4px;border-radius:2px;background:linear-gradient(135deg,#3C74EA,#1E52CE 60%,#1A48C0);box-shadow:inset 0 0 0 0.7px #5C8AEE"></div>
<div style="left:480.2px;top:51.8px;width:12.4px;height:12.4px;border-radius:2px;background:linear-gradient(135deg,#4C8CF6,#1E55D6 60%,#1A48C0);box-shadow:inset 0 0 0 0.7px #E4ECFC"></div>
<div style="left:494.4px;top:51.8px;width:12.6px;height:12.4px;border-radius:2px;background:linear-gradient(135deg,#F08A6A,#D8401E 60%,#B82E12);box-shadow:inset 0 0 0 0.7px #F4E0DC"></div>
<div style="left:469.6px;top:60px;width:4.2px;height:1.5px;background:#86A6EE"></div>
<div style="left:483.2px;top:54.6px;width:6.6px;height:6.8px;border:1px solid #fff;border-top-width:1.8px;box-sizing:border-box"></div>
<svg style="left:494.4px;top:51.8px" width="12.6" height="12.4" viewBox="0 0 12.6 12.4"><path d="M3.4 3.3 L9.2 9.1 M9.2 3.3 L3.4 9.1" stroke="#fff" stroke-width="1.5"/></svg>
<div style="left:163px;top:84.6px;width:340px;height:241.6px;background:#ECE9D8;border:0.7px solid #FAF9F4;box-sizing:border-box;box-shadow:0.6px 0.6px 0 0 #BFC4C8"></div>
<div style="left:163.6px;top:73.4px;width:43.6px;height:11.2px;background:linear-gradient(#FEFEFC,#F2F0E6);border:0.6px solid #A3A08E;border-bottom:none;border-radius:2px 2px 0 0;box-sizing:border-box"></div>
<div style="left:209px;top:73.4px;width:47.4px;height:11.2px;background:linear-gradient(#FEFEFC,#F2F0E6);border:0.6px solid #A3A08E;border-bottom:none;border-radius:2px 2px 0 0;box-sizing:border-box"></div>
<div style="left:258px;top:73.4px;width:57px;height:11.2px;background:linear-gradient(#FEFEFC,#F2F0E6);border:0.6px solid #A3A08E;border-bottom:none;border-radius:2px 2px 0 0;box-sizing:border-box"></div>
<div style="left:316px;top:71.4px;width:39.6px;height:14px;background:#FCFCFA;border:0.6px solid #A3A08E;border-bottom:none;border-top:1.5px solid #F2A01E;border-radius:2px 2px 0 0;box-sizing:border-box"></div>
<span class="t" style="left:179.8px;top:74.85px;height:9.1px;line-height:9.1px;font-size:7px;color:#000;letter-spacing:-0.112px;">Settings</span>
<span class="t" style="left:226px;top:74.85px;height:9.1px;line-height:9.1px;font-size:7px;color:#000;letter-spacing:-0.157px;">Attributes</span>
<span class="t" style="left:274.6px;top:74.85px;height:9.1px;line-height:9.1px;font-size:7px;color:#000;letter-spacing:-0.076px;">Quick Action</span>
<span class="t" style="left:334.4px;top:73.85px;height:9.1px;line-height:9.1px;font-size:7px;color:#000;letter-spacing:-0.116px;">Script</span>
<svg style="left:0;top:0" width="640" height="459" viewBox="0 0 640 459"><path d="M172.2 75 l2.2 1.2 l-2.2 3.4 l-2-1.2z" fill="#2E6AD0"/><path d="M167 82.6 c.6-2.6 2-3.8 3.4-3.6 l1.6 1 c.2 1.6-1.6 3.2-5 2.6z" fill="#E6B020" stroke="#A87C0C" stroke-width=".4"/><ellipse cx="217.6" cy="80.6" rx="4.6" ry="2.6" fill="#F8E48C" stroke="#C8A020" stroke-width=".6"/><path d="M216 80 l3.4-4.2 l1.4 1 l-3.2 4.2z" fill="#4DB33B" stroke="#2B7E22" stroke-width=".4"/><circle cx="220.6" cy="75.6" r="1" fill="#E0443A"/><ellipse cx="266" cy="79.6" rx="4.6" ry="3" fill="#B8B8DA" stroke="#7C7CB4" stroke-width=".6" transform="rotate(-20 266 79.6)"/><ellipse cx="265" cy="78.6" rx="2.4" ry="1.2" fill="#E8E8F6" transform="rotate(-20 265 78.6)"/><rect x="321.6" y="74.4" width="8" height="8" fill="#FDFDFE" stroke="#3E6AC8" stroke-width=".8"/><path d="M323 76.6 h3 M323 78.4 h2" stroke="#E04A2A" stroke-width=".8"/><path d="M323 80.4 h4" stroke="#3DAA3A" stroke-width=".8"/></svg>
<div style="left:172px;top:104.4px;width:322.6px;height:213.8px;background:#FFFFFF;border:0.6px solid #B9B6A4;box-sizing:border-box"></div>
<div style="left:172px;top:92.2px;width:33.4px;height:13px;background:#FFFFFF;border:0.6px solid #A3A08E;border-bottom:none;border-top:1.4px solid #F2A01E;border-radius:2px 2px 0 0;box-sizing:border-box"></div>
<div style="left:205.8px;top:93.6px;width:46.8px;height:10.8px;background:linear-gradient(#FEFEFC,#F1EFE4);border:0.6px solid #A3A08E;border-bottom:none;border-radius:2px 2px 0 0;box-sizing:border-box"></div>
<div style="left:254.6px;top:93.6px;width:31.8px;height:10.8px;background:linear-gradient(#FEFEFC,#F1EFE4);border:0.6px solid #A3A08E;border-bottom:none;border-radius:2px 2px 0 0;box-sizing:border-box"></div>
<div style="left:288.8px;top:93.6px;width:33.4px;height:10.8px;background:linear-gradient(#FEFEFC,#F1EFE4);border:0.6px solid #A3A08E;border-bottom:none;border-radius:2px 2px 0 0;box-sizing:border-box"></div>
<span class="t" style="left:176.4px;top:93.85px;height:9.1px;line-height:9.1px;font-size:7px;color:#000;letter-spacing:-0.231px;">On Click</span>
<span class="t" style="left:209.2px;top:94.85px;height:9.1px;line-height:9.1px;font-size:7px;color:#000;letter-spacing:-0.337px;">On Right-Click</span>
<span class="t" style="left:258.4px;top:94.85px;height:9.1px;line-height:9.1px;font-size:7px;color:#000;letter-spacing:-0.327px;">On Enter</span>
<span class="t" style="left:292.4px;top:94.85px;height:9.1px;line-height:9.1px;font-size:7px;color:#000;letter-spacing:-0.419px;">On Leave</span>
<span class="t" style="left:180.8px;top:114.65px;height:9.1px;line-height:9.1px;font-size:7px;color:#000;letter-spacing:-0.238px;">Event variables:</span>
<div style="left:235.2px;top:112.4px;width:252.4px;height:13.8px;background:#fff;border:0.7px solid #8FA8CC;box-sizing:border-box"></div>
<span class="t" style="left:238.2px;top:114.65px;height:9.1px;line-height:9.1px;font-size:7px;color:#000;letter-spacing:-0.384px;">None</span>
<div style="left:180.6px;top:130.8px;width:305.6px;height:139px;background:#fff;border:0.7px solid;border-color:#7C7A70 #C8C6BA #C8C6BA #7C7A70;box-sizing:border-box"></div>
<div style="left:196.5px;top:131.6px;width:279.7px;height:38.2px;background:#000"></div>
<span class="t" style="left:183.3px;top:133.161px;height:9.47759px;line-height:9.47759px;font-size:7.29045px;color:#000;font-family:'Liberation Mono',monospace;">01</span>
<span class="t" style="left:183.3px;top:142.561px;height:9.47759px;line-height:9.47759px;font-size:7.29045px;color:#000;font-family:'Liberation Mono',monospace;">02</span>
<span class="t" style="left:183.3px;top:151.961px;height:9.47759px;line-height:9.47759px;font-size:7.29045px;color:#000;font-family:'Liberation Mono',monospace;">03</span>
<span class="t" style="left:183.3px;top:161.261px;height:9.47759px;line-height:9.47759px;font-size:7.29045px;color:#000;font-family:'Liberation Mono',monospace;">04</span>
<span class="t" style="left:183.3px;top:170.561px;height:9.47759px;line-height:9.47759px;font-size:7.29045px;color:#000;font-family:'Liberation Mono',monospace;">05</span>
<span class="t" style="left:196.75px;top:133.161px;height:9.47759px;line-height:9.47759px;font-size:7.29045px;color:#fff;font-weight:bold;font-family:'Liberation Mono',monospace;">Video</span>
<span class="t" style="left:218.625px;top:133.161px;height:9.47759px;line-height:9.47759px;font-size:7.29045px;color:#30E0E8;font-weight:bold;font-family:'Liberation Mono',monospace;">.</span>
<span class="t" style="left:223px;top:133.161px;height:9.47759px;line-height:9.47759px;font-size:7.29045px;color:#fff;font-weight:bold;font-family:'Liberation Mono',monospace;">Play(</span>
<span class="t" style="left:244.875px;top:133.161px;height:9.47759px;line-height:9.47759px;font-size:7.29045px;color:#3CD65A;font-weight:bold;font-family:'Liberation Mono',monospace;">&quot;mermelia&quot;</span>
<span class="t" style="left:288.625px;top:133.161px;height:9.47759px;line-height:9.47759px;font-size:7.29045px;color:#fff;font-weight:bold;font-family:'Liberation Mono',monospace;">);</span>
<span class="t" style="left:196.75px;top:142.561px;height:9.47759px;line-height:9.47759px;font-size:7.29045px;color:#fff;font-weight:bold;font-family:'Liberation Mono',monospace;">Video</span>
<span class="t" style="left:218.625px;top:142.561px;height:9.47759px;line-height:9.47759px;font-size:7.29045px;color:#30E0E8;font-weight:bold;font-family:'Liberation Mono',monospace;">.</span>
<span class="t" style="left:196.75px;top:151.961px;height:9.47759px;line-height:9.47759px;font-size:7.29045px;color:#fff;font-weight:bold;font-family:'Liberation Mono',monospace;">Video</span>
<span class="t" style="left:218.625px;top:151.961px;height:9.47759px;line-height:9.47759px;font-size:7.29045px;color:#30E0E8;font-weight:bold;font-family:'Liberation Mono',monospace;">.</span>
<span class="t" style="left:196.75px;top:161.261px;height:9.47759px;line-height:9.47759px;font-size:7.29045px;color:#fff;font-weight:bold;font-family:'Liberation Mono',monospace;">Video</span>
<span class="t" style="left:218.625px;top:161.261px;height:9.47759px;line-height:9.47759px;font-size:7.29045px;color:#30E0E8;font-weight:bold;font-family:'Liberation Mono',monospace;">.</span>
<span class="t" style="left:342.875px;top:142.561px;height:9.47759px;line-height:9.47759px;font-size:7.29045px;color:#fff;font-weight:bold;font-family:'Liberation Mono',monospace;">);</span>
<span class="t" style="left:341.125px;top:161.261px;height:9.47759px;line-height:9.47759px;font-size:7.29045px;color:#30E0E8;font-weight:bold;font-family:'Liberation Mono',monospace;">,</span>
<span class="t" style="left:349.875px;top:161.261px;height:9.47759px;line-height:9.47759px;font-size:7.29045px;color:#FFE93A;font-weight:bold;font-family:'Liberation Mono',monospace;">false</span>
<span class="t" style="left:371.75px;top:161.261px;height:9.47759px;line-height:9.47759px;font-size:7.29045px;color:#fff;font-weight:bold;font-family:'Liberation Mono',monospace;">);</span>
<div style="left:476.2px;top:131.5px;width:9.4px;height:128px;background:linear-gradient(90deg,#EFEDE2,#FCFCFA)"></div>
<div style="left:476.2px;top:131.8px;width:9.6px;height:4.7px;background:#E4E1D2;border:0.5px solid #8C8A80;box-sizing:border-box"></div>
<div style="left:476.5px;top:137px;width:9px;height:9.6px;background:linear-gradient(135deg,#CEDBFC,#B8CAF8);border-radius:1.5px;box-shadow:inset 0 0 0 0.5px #E4ECFE"></div>
<svg style="left:0;top:0" width="640" height="459" viewBox="0 0 640 459"><path d="M479.0 142.8 L481.0 140.8 L483.0 142.8" fill="none" stroke="#3E58A8" stroke-width="1.2"/></svg>
<div style="left:476.7px;top:147.8px;width:8.6px;height:71.4px;background:linear-gradient(90deg,#CBD9FC,#B4C8F8);border:0.6px solid #F6F8FE;border-radius:1.5px;box-sizing:border-box;box-shadow:0 0 0 0.4px #9CB0E0"></div>
<div style="left:479px;top:182px;width:4px;height:0.6px;background:#8EA6E4"></div>
<div style="left:479px;top:183.3px;width:4px;height:0.6px;background:#8EA6E4"></div>
<div style="left:479px;top:184.6px;width:4px;height:0.6px;background:#8EA6E4"></div>
<div style="left:476.5px;top:249px;width:9px;height:9.6px;background:linear-gradient(135deg,#CEDBFC,#B8CAF8);border-radius:1.5px;box-shadow:inset 0 0 0 0.5px #E4ECFE"></div>
<svg style="left:0;top:0" width="640" height="459" viewBox="0 0 640 459"><path d="M479.0 252.8 L481.0 254.8 L483.0 252.8" fill="none" stroke="#3E58A8" stroke-width="1.2"/></svg>
<div style="left:181.3px;top:259.6px;width:295px;height:9.6px;background:linear-gradient(#EFEDE2,#FCFCFA)"></div>
<div style="left:181.3px;top:259.6px;width:3.6px;height:9.6px;background:#DAD8CC;border:0.5px solid #555;box-sizing:border-box"></div>
<div style="left:185.2px;top:259.8px;width:9.4px;height:9.2px;background:linear-gradient(135deg,#CEDBFC,#B8CAF8);border-radius:1.5px;box-shadow:inset 0 0 0 0.5px #E4ECFE"></div>
<svg style="left:0;top:0" width="640" height="459" viewBox="0 0 640 459"><path d="M190.89999999999998 262.40000000000003 L188.89999999999998 264.40000000000003 L190.89999999999998 266.40000000000003" fill="none" stroke="#3E58A8" stroke-width="1.2"/></svg>
<div style="left:195px;top:260px;width:136px;height:8.8px;background:linear-gradient(#CBD9FC,#B4C8F8);border:0.6px solid #F6F8FE;border-radius:1.5px;box-sizing:border-box;box-shadow:0 0 0 0.4px #9CB0E0"></div>
<div style="left:466.6px;top:259.8px;width:9.4px;height:9.2px;background:linear-gradient(135deg,#CEDBFC,#B8CAF8);border-radius:1.5px;box-shadow:inset 0 0 0 0.5px #E4ECFE"></div>
<svg style="left:0;top:0" width="640" height="459" viewBox="0 0 640 459"><path d="M470.3 262.40000000000003 L472.3 264.40000000000003 L470.3 266.40000000000003" fill="none" stroke="#3E58A8" stroke-width="1.2"/></svg>
<div style="left:476.2px;top:259.6px;width:9.4px;height:9.6px;background:#ECE9D8"></div>
<span class="t" style="left:180.8px;top:276.45px;height:9.1px;line-height:9.1px;font-size:7px;color:#000;letter-spacing:-0.183px;">Quick help:</span>
<div style="left:218.6px;top:274.2px;width:249px;height:13.8px;background:#fff;border:0.7px solid #8FA8CC;box-sizing:border-box"></div>
<span class="t" style="left:221.4px;top:276.45px;height:9.1px;line-height:9.1px;font-size:7px;color:#000;letter-spacing:-0.248px;">To see Quick Help here, select one of the available actions.</span>
<div style="left:472.8px;top:274px;width:13.4px;height:14.2px;background:linear-gradient(#FFFFFF,#F3F2EA 70%,#E2DFD0);border:0.7px solid #1E3A7A;border-radius:2px;box-sizing:border-box;box-shadow:inset 0 -1px 1px #D8D4C4"></div>
<svg style="left:0;top:0" width="640" height="459" viewBox="0 0 640 459"><circle cx="479.5" cy="281" r="4.2" fill="#4E8CE4" stroke="#2A58B0" stroke-width=".7"/><circle cx="478.8" cy="280" r="2" fill="#A8CCF8"/></svg>
<div style="left:181px;top:296.2px;width:70px;height:14px;background:linear-gradient(#FFFFFF,#F3F2EA 70%,#E2DFD0);border:0.7px solid #1E3A7A;border-radius:2px;box-sizing:border-box;box-shadow:inset 0 -1px 1px #D8D4C4"></div>
<div style="left:346.8px;top:296.2px;width:24px;height:14px;background:linear-gradient(#FFFFFF,#F3F2EA 70%,#E2DFD0);border:0.7px solid #1E3A7A;border-radius:2px;box-sizing:border-box;box-shadow:inset 0 -1px 1px #D8D4C4"></div>
<div style="left:378.4px;top:296.2px;width:24.6px;height:14px;background:linear-gradient(#FFFFFF,#F3F2EA 70%,#E2DFD0);border:0.7px solid #1E3A7A;border-radius:2px;box-sizing:border-box;box-shadow:inset 0 -1px 1px #D8D4C4"></div>
<div style="left:410.2px;top:296.2px;width:59.6px;height:14px;background:linear-gradient(#FFFFFF,#F3F2EA 70%,#E2DFD0);border:0.7px solid #1E3A7A;border-radius:2px;box-sizing:border-box;box-shadow:inset 0 -1px 1px #D8D4C4"></div>
<span class="t" style="left:198px;top:298.85px;height:9.1px;line-height:9.1px;font-size:7px;color:#000;letter-spacing:-0.247px;">Add Action</span>
<span class="t" style="left:425.6px;top:298.85px;height:9.1px;line-height:9.1px;font-size:7px;color:#000;letter-spacing:-0.317px;">Advanced</span>
<svg style="left:0;top:0" width="640" height="459" viewBox="0 0 640 459"><path d="M184.6 307 L191 301.6" stroke="#1a1a1a" stroke-width="1.8" stroke-linecap="round"/><path d="M186.4 298 l.8 1.6 l1.8 .2 l-1.3 1.2 l.3 1.8 l-1.6-.9 l-1.6 .9 l.3-1.8 l-1.3-1.2 l1.8-.2z" fill="#F4D23C" stroke="#C79A10" stroke-width=".3"/><path d="M191.4 297.6 l.6 1.1 l1.2 .2 l-.9 .9 l.2 1.2 l-1.1-.6 l-1.1 .6 l.2-1.2 l-.9-.9 l1.2-.2z" fill="#F4D23C" stroke="#C79A10" stroke-width=".3"/><path d="M351 307.6 v-7.4 l2.4 2.2 l1.2-3.6 l3.4 6.2 l-2.6 .2 l1 2.6z" fill="#4DB33B" stroke="#2B7E22" stroke-width=".5"/><ellipse cx="388.6" cy="303.6" rx="4.6" ry="3" fill="#C8C8D4" stroke="#7C7C94" stroke-width=".6"/><ellipse cx="388" cy="302.6" rx="2.4" ry="1.2" fill="#F0F0F8"/><path d="M415 298.4 h7.6 l1.2 1.2 v8.6 h-8.8z" fill="#2C62C2" stroke="#173E8E" stroke-width=".5"/><rect x="416.4" y="298.8" width="5.6" height="3.6" fill="#F1F4FA"/><rect x="417" y="304.6" width="4.6" height="3.2" fill="#C9D4EA"/><path d="M364.2 301.0 l2.6 2.4 l-2.6 2.4z" fill="#000"/><path d="M395.8 301.0 l2.6 2.4 l-2.6 2.4z" fill="#000"/><path d="M462.2 301.0 l2.6 2.4 l-2.6 2.4z" fill="#000"/></svg>
<div style="left:357.4px;top:335px;width:45.4px;height:12.8px;background:linear-gradient(#FFFFFF,#F3F2EA 70%,#E2DFD0);border:0.7px solid #1E3A7A;border-radius:2px;box-sizing:border-box;box-shadow:inset 0 0 0 1px #C6D6F6"></div>
<div style="left:407.2px;top:335px;width:45.4px;height:12.8px;background:linear-gradient(#FFFFFF,#F3F2EA 70%,#E2DFD0);border:0.7px solid #1E3A7A;border-radius:2px;box-sizing:border-box;box-shadow:inset 0 -1px 1px #D8D4C4"></div>
<div style="left:458.2px;top:335px;width:45.4px;height:12.8px;background:linear-gradient(#FFFFFF,#F3F2EA 70%,#E2DFD0);border:0.7px solid #1E3A7A;border-radius:2px;box-sizing:border-box;box-shadow:inset 0 -1px 1px #D8D4C4"></div>
<span class="t" style="left:374.6px;top:337.05px;height:9.1px;line-height:9.1px;font-size:7px;color:#000;letter-spacing:0.243px;">OK</span>
<span class="t" style="left:419.6px;top:337.05px;height:9.1px;line-height:9.1px;font-size:7px;color:#000;letter-spacing:-0.198px;">Cancel</span>
<span class="t" style="left:473.6px;top:337.05px;height:9.1px;line-height:9.1px;font-size:7px;color:#000;letter-spacing:-0.299px;">Help</span>
<div style="left:505.6px;top:351.4px;width:1.3px;height:1.3px;background:#B8B4A0"></div>
<div style="left:503.2px;top:351.4px;width:1.3px;height:1.3px;background:#B8B4A0"></div>
<div style="left:505.6px;top:349px;width:1.3px;height:1.3px;background:#B8B4A0"></div>
<div style="left:500.8px;top:351.4px;width:1.3px;height:1.3px;background:#B8B4A0"></div>
<div style="left:503.2px;top:349px;width:1.3px;height:1.3px;background:#B8B4A0"></div>
<div style="left:505.6px;top:346.6px;width:1.3px;height:1.3px;background:#B8B4A0"></div>
<div style="left:352.2px;top:206.4px;width:26.8px;height:22.4px;border:3px solid #FF0000;background:#FBFBFB;box-sizing:border-box"></div>
<span class="t" style="left:361.7px;top:207.025px;height:22.75px;line-height:22.75px;font-size:17.5px;color:#F00A14;font-weight:bold;font-family:'Liberation Serif',serif;">1</span>
<div style="left:224.6px;top:140.8px;width:120.6px;height:245.9px;background:rgba(0,0,0,.32);filter:blur(0.7px)"></div>
<div style="left:223.2px;top:139.2px;width:120px;height:245.5px;background:#FFFFFF;border:0.7px solid #9D9A8A;box-sizing:border-box"></div>
<span class="t" style="left:239.8px;top:142.65px;height:9.1px;line-height:9.1px;font-size:7px;color:#000;letter-spacing:-0.026px;"><u>A</u>ction Wizard...</span>
<span class="t" style="left:306.9px;top:142.65px;height:9.1px;line-height:9.1px;font-size:7px;color:#000;letter-spacing:0.120px;">Ctrl+W</span>
<span class="t" style="left:239.8px;top:155.15px;height:9.1px;line-height:9.1px;font-size:7px;color:#ACA899;letter-spacing:0.035px;"><u>E</u>dit Action...</span>
<span class="t" style="left:309.4px;top:155.15px;height:9.1px;line-height:9.1px;font-size:7px;color:#ACA899;letter-spacing:0.026px;">Ctrl+E</span>
<span class="t" style="left:239.8px;top:167.65px;height:9.1px;line-height:9.1px;font-size:7px;color:#000;letter-spacing:0.015px;"><u>I</u>nsert</span>
<span class="t" style="left:239.8px;top:180.15px;height:9.1px;line-height:9.1px;font-size:7px;color:#000;letter-spacing:-0.249px;"><u>Q</u>uick Scripts</span>
<div style="left:232px;top:193.25px;width:102px;height:0.7px;background:#ACA899"></div>
<span class="t" style="left:239.8px;top:197.65px;height:9.1px;line-height:9.1px;font-size:7px;color:#000;letter-spacing:-0.164px;">Cu<u>t</u></span>
<span class="t" style="left:309.4px;top:197.65px;height:9.1px;line-height:9.1px;font-size:7px;color:#000;letter-spacing:0.009px;">Ctrl+X</span>
<div style="left:238px;top:208.5px;width:103.2px;height:12.2px;background:#316AC5"></div>
<div style="left:225.4px;top:208.5px;width:11.6px;height:12.2px;background:#F4F3EC;border:0.6px solid #B9C6E0;box-sizing:border-box"></div>
<span class="t" style="left:239.8px;top:210.15px;height:9.1px;line-height:9.1px;font-size:7px;color:#fff;letter-spacing:-0.285px;"><u>C</u>opy</span>
<span class="t" style="left:309.4px;top:210.15px;height:9.1px;line-height:9.1px;font-size:7px;color:#fff;letter-spacing:0.028px;">Ctrl+C</span>
<span class="t" style="left:239.8px;top:222.65px;height:9.1px;line-height:9.1px;font-size:7px;color:#000;letter-spacing:-0.260px;"><u>P</u>aste</span>
<span class="t" style="left:309.4px;top:222.65px;height:9.1px;line-height:9.1px;font-size:7px;color:#000;letter-spacing:0.009px;">Ctrl+V</span>
<span class="t" style="left:239.8px;top:235.15px;height:9.1px;line-height:9.1px;font-size:7px;color:#000;letter-spacing:-0.139px;"><u>D</u>elete</span>
<span class="t" style="left:309.4px;top:235.15px;height:9.1px;line-height:9.1px;font-size:7px;color:#000;letter-spacing:-0.139px;">Delete</span>
<div style="left:232px;top:248.25px;width:102px;height:0.7px;background:#ACA899"></div>
<span class="t" style="left:239.8px;top:252.65px;height:9.1px;line-height:9.1px;font-size:7px;color:#000;letter-spacing:-0.139px;">Select <u>A</u>ll</span>
<span class="t" style="left:309.4px;top:252.65px;height:9.1px;line-height:9.1px;font-size:7px;color:#000;letter-spacing:0.059px;">Ctrl+A</span>
<div style="left:232px;top:265.75px;width:102px;height:0.7px;background:#ACA899"></div>
<span class="t" style="left:239.8px;top:270.15px;height:9.1px;line-height:9.1px;font-size:7px;color:#ACA899;letter-spacing:-0.284px;"><u>U</u>ndo</span>
<span class="t" style="left:309.4px;top:270.15px;height:9.1px;line-height:9.1px;font-size:7px;color:#ACA899;letter-spacing:0.058px;">Ctrl+Z</span>
<span class="t" style="left:239.8px;top:282.65px;height:9.1px;line-height:9.1px;font-size:7px;color:#ACA899;letter-spacing:-0.334px;">R<u>e</u>do</span>
<span class="t" style="left:309.4px;top:282.65px;height:9.1px;line-height:9.1px;font-size:7px;color:#ACA899;letter-spacing:-0.007px;">Ctrl+Y</span>
<div style="left:232px;top:295.75px;width:102px;height:0.7px;background:#ACA899"></div>
<span class="t" style="left:239.8px;top:300.15px;height:9.1px;line-height:9.1px;font-size:7px;color:#000;letter-spacing:-0.436px;"><u>F</u>ind...</span>
<span class="t" style="left:309.4px;top:300.15px;height:9.1px;line-height:9.1px;font-size:7px;color:#000;letter-spacing:-0.008px;">Ctrl+F</span>
<span class="t" style="left:239.8px;top:312.65px;height:9.1px;line-height:9.1px;font-size:7px;color:#000;letter-spacing:-0.092px;">Re<u>p</u>lace...</span>
<span class="t" style="left:309.4px;top:312.65px;height:9.1px;line-height:9.1px;font-size:7px;color:#000;letter-spacing:0.062px;">Ctrl+H</span>
<div style="left:232px;top:325.75px;width:102px;height:0.7px;background:#ACA899"></div>
<span class="t" style="left:239.8px;top:330.15px;height:9.1px;line-height:9.1px;font-size:7px;color:#000;letter-spacing:-0.268px;"><u>B</u>ookmarks</span>
<span class="t" style="left:239.8px;top:342.65px;height:9.1px;line-height:9.1px;font-size:7px;color:#000;letter-spacing:-0.258px;">Macros</span>
<span class="t" style="left:239.8px;top:355.15px;height:9.1px;line-height:9.1px;font-size:7px;color:#000;letter-spacing:-0.192px;">Ad<u>v</u>anced</span>
<div style="left:232px;top:368.25px;width:102px;height:0.7px;background:#ACA899"></div>
<span class="t" style="left:239.8px;top:372.65px;height:9.1px;line-height:9.1px;font-size:7px;color:#000;letter-spacing:-0.042px;"><u>E</u>ditor Settings...</span>
<span class="t" style="left:299.6px;top:372.65px;height:9.1px;line-height:9.1px;font-size:7px;color:#000;letter-spacing:0.068px;">Alt+Enter</span>
<svg style="left:0;top:0" width="640" height="459" viewBox="0 0 640 459"><path d="M228.0 150.6 L233.0 146.39999999999998" stroke="#1a1a1a" stroke-width="2.3" stroke-linecap="round"/><circle cx="229.8" cy="144.2" r="1.5" fill="#F4D23C" stroke="#C79A10" stroke-width=".3"/><circle cx="234.0" cy="143.79999999999998" r="1.3" fill="#F4D23C" stroke="#C79A10" stroke-width=".3"/><rect x="227.8" y="155.5" width="7.4" height="8.6" fill="#F0EFEA" stroke="#B4B2A8" stroke-width=".7"/><path d="M229.4 158.1 h4 M229.4 160.1 h4 M229.4 161.89999999999998 h3" stroke="#C4C2B8" stroke-width=".6"/><path d="M335.2 170.0 l2.4 2.2 l-2.4 2.2z" fill="#000"/><path d="M335.2 182.5 l2.4 2.2 l-2.4 2.2z" fill="#000"/><path d="M227.8 201.2 L233.8 202.79999999999998 M230.4 198.2 L232.0 203.6" stroke="#8A94A6" stroke-width="1.2" stroke-linecap="round"/><circle cx="234.0" cy="204.2" r="1.5" fill="none" stroke="#2E68C8" stroke-width="1"/><circle cx="231.20000000000002" cy="205.2" r="1.5" fill="none" stroke="#2E68C8" stroke-width="1"/><path d="M227.6 210.89999999999998 h3.6 l1.6 1.6 v4.8 h-5.2z" fill="#E8ECF8" stroke="#4C61B4" stroke-width=".6"/><path d="M230.4 212.7 h3.6 l1.6 1.6 v4.8 h-5.2z" fill="#F4F6FC" stroke="#4C61B4" stroke-width=".6"/><path d="M231.4 215.29999999999998 h3.2 M231.4 216.89999999999998 h3.2" stroke="#7F86C8" stroke-width=".5"/><rect x="227.6" y="224.0" width="7.2" height="7.6" rx=".8" fill="#E8A43C" stroke="#A8701C" stroke-width=".6"/><rect x="229.6" y="222.79999999999998" width="3.2" height="2" rx=".6" fill="#8C8C9C"/><rect x="230.0" y="226.2" width="5.6" height="5.6" fill="#F4F6FC" stroke="#6C7CB4" stroke-width=".5"/><path d="M228.20000000000002 236.29999999999998 L234.6 243.1 M234.6 236.29999999999998 L228.20000000000002 243.1" stroke="#E0442A" stroke-width="2.7" stroke-linecap="round"/><path d="M234.8 278.1 c.8-3.6-1.2-6-4.8-5 l-.5-1.4 l-2.7 3.4 l4.2 1.1 l-.4-1.3 c2.1-.6 3 .7 2.1 3z" fill="#C8C7C2" stroke="#A3A29C" stroke-width=".5"/><path d="M228.0 290.6 c-.8-3.6 1.2-6 4.8-5 l.5-1.4 l2.7 3.4 l-4.2 1.1 l.4-1.3 c-2.1-.6-3 .7-2.1 3z" fill="#C8C7C2" stroke="#A3A29C" stroke-width=".5"/><circle cx="229.4" cy="304.1" r="2" fill="#9AB4D8" stroke="#4A5A78" stroke-width=".7"/><circle cx="233.20000000000002" cy="305.50000000000006" r="2" fill="#9AB4D8" stroke="#4A5A78" stroke-width=".7"/><path d="M227.8 301.70000000000005 l3-1 M231.8 303.1 l3-1" stroke="#4A5A78" stroke-width="1"/><rect x="227.8" y="316.6" width="4" height="4.4" fill="#E0443A"/><rect x="231.4" y="313.20000000000005" width="4" height="4.4" fill="#3DAA3A"/><path d="M228.0 313.6 l3 3 M232.0 318.20000000000005 l3 3" stroke="#3A5AB0" stroke-width="1.1"/><path d="M335.2 332.50000000000006 l2.4 2.2 l-2.4 2.2z" fill="#000"/><path d="M335.2 345.00000000000006 l2.4 2.2 l-2.4 2.2z" fill="#000"/><path d="M335.2 357.50000000000006 l2.4 2.2 l-2.4 2.2z" fill="#000"/><rect x="228.4" y="373.6" width="7" height="5.6" fill="#3E7AE4" stroke="#2A4A90" stroke-width=".6"/><rect x="230.0" y="379.20000000000005" width="3.6" height="1.8" fill="#8C96AC"/><path d="M227.20000000000002 373.00000000000006 l4 4" stroke="#E0443A" stroke-width="1.3"/></svg>
<div style="left:14.6px;top:413.8px;width:626px;height:1.3px;background:#FBFBF8"></div>
<div style="left:14.6px;top:415.1px;width:626px;height:3px;background:#ECE9D8"></div>
<div style="left:14.6px;top:417.9px;width:626px;height:13px;background:linear-gradient(#819EE8,#7090E4 35%,#7494E6 75%,#8CA8EE)"></div>
<span class="t" style="left:17px;top:420.05px;height:9.1px;line-height:9.1px;font-size:7px;color:#D2DCF8;letter-spacing:-0.246px;">Project Size</span>
<div style="left:0px;top:430.9px;width:640px;height:18px;background:#ECE9D8"></div>
<div style="left:15px;top:432.2px;width:625px;height:16px;background:#D8D5CC;border-top:0.8px solid #77756C;border-left:0.8px solid #77756C;box-sizing:border-box"></div>
<svg style="left:0;top:0" width="640" height="459" viewBox="0 0 640 459"><rect x="21.60" y="433" width="1" height="8.4" fill="#111"/><rect x="41.31" y="433" width="1" height="5" fill="#111"/><rect x="61.02" y="433" width="1" height="5" fill="#111"/><rect x="80.73" y="433" width="1" height="8.4" fill="#111"/><rect x="100.44" y="433" width="1" height="5" fill="#111"/><rect x="120.15" y="433" width="1" height="5" fill="#111"/><rect x="139.86" y="433" width="1" height="8.4" fill="#111"/><rect x="159.57" y="433" width="1" height="5" fill="#111"/><rect x="179.28" y="433" width="1" height="5" fill="#111"/><rect x="198.99" y="433" width="1" height="8.4" fill="#111"/><rect x="218.70" y="433" width="1" height="5" fill="#111"/><rect x="238.41" y="433" width="1" height="5" fill="#111"/><rect x="258.12" y="433" width="1" height="8.4" fill="#111"/><rect x="277.83" y="433" width="1" height="5" fill="#111"/><rect x="297.54" y="433" width="1" height="5" fill="#111"/><rect x="317.25" y="433" width="1" height="8.4" fill="#111"/><rect x="336.96" y="433" width="1" height="5" fill="#111"/><rect x="356.67" y="433" width="1" height="5" fill="#111"/><rect x="376.38" y="433" width="1" height="8.4" fill="#111"/><rect x="396.09" y="433" width="1" height="5" fill="#111"/><rect x="415.80" y="433" width="1" height="5" fill="#111"/><rect x="435.51" y="433" width="1" height="8.4" fill="#111"/><rect x="455.22" y="433" width="1" height="5" fill="#111"/><rect x="474.93" y="433" width="1" height="5" fill="#111"/><rect x="494.64" y="433" width="1" height="8.4" fill="#111"/><rect x="514.35" y="433" width="1" height="5" fill="#111"/><rect x="534.06" y="433" width="1" height="5" fill="#111"/><rect x="553.77" y="433" width="1" height="8.4" fill="#111"/><rect x="573.48" y="433" width="1" height="5" fill="#111"/><rect x="593.19" y="433" width="1" height="5" fill="#111"/><rect x="612.90" y="433" width="1" height="8.4" fill="#111"/><rect x="632.61" y="433" width="1" height="5" fill="#111"/><rect x="23" y="436" width="36.2" height="5" fill="#6A6860"/><rect x="22.1" y="435.3" width="36.4" height="5.1" fill="#0808EE"/><path d="M519.2 433 v12" stroke="#E8E070" stroke-width=".7" stroke-dasharray="1 .8"/><path d="M574.6 433 v12" stroke="#E85A5A" stroke-width=".7" stroke-dasharray="1 .8"/><circle cx="622.6" cy="424.6" r="3.2" fill="none" stroke="#F0F4FE" stroke-width="1.7" stroke-dasharray="15 5"/><path d="M624 419.8 l3.2 .6 l-1.6 3z" fill="#F0F4FE"/><rect x="630" y="419.3" width="10" height="9.4" rx="1" fill="#9CB2F0"/><path d="M632.6 421.6 l4.6 4.6 M637.2 421.6 l-4.6 4.6" stroke="#FFFFFF" stroke-width="1.5"/></svg>
<span class="t" style="left:17.2px;top:441.28px;height:6.24px;line-height:6.24px;font-size:4.8px;color:#222;">0MB</span>
<span class="t" style="left:75.63px;top:441.28px;height:6.24px;line-height:6.24px;font-size:4.8px;color:#222;">75MB</span>
<span class="t" style="left:134.76px;top:441.28px;height:6.24px;line-height:6.24px;font-size:4.8px;color:#222;">150MB</span>
<span class="t" style="left:193.89px;top:441.28px;height:6.24px;line-height:6.24px;font-size:4.8px;color:#222;">225MB</span>
<span class="t" style="left:253.02px;top:441.28px;height:6.24px;line-height:6.24px;font-size:4.8px;color:#222;">300MB</span>
<span class="t" style="left:312.15px;top:441.28px;height:6.24px;line-height:6.24px;font-size:4.8px;color:#222;">375MB</span>
<span class="t" style="left:371.28px;top:441.28px;height:6.24px;line-height:6.24px;font-size:4.8px;color:#222;">450MB</span>
<span class="t" style="left:430.41px;top:441.28px;height:6.24px;line-height:6.24px;font-size:4.8px;color:#222;">525MB</span>
<span class="t" style="left:489.54px;top:441.28px;height:6.24px;line-height:6.24px;font-size:4.8px;color:#222;">600MB</span>
<span class="t" style="left:548.67px;top:441.28px;height:6.24px;line-height:6.24px;font-size:4.8px;color:#222;">675MB</span>
<span class="t" style="left:607.8px;top:441.28px;height:6.24px;line-height:6.24px;font-size:4.8px;color:#222;">750MB</span>
<div style="left:0px;top:448.4px;width:640px;height:10.6px;background:#ECE9D8;border-top:0.6px solid #C8C4B0;box-sizing:border-box"></div>
<span class="t" style="left:1.2px;top:450.12px;height:9.36px;line-height:9.36px;font-size:7.2px;color:#000;letter-spacing:-0.354px;">Press F1 for Help</span>
<span class="t" style="left:449px;top:449.99px;height:9.62px;line-height:9.62px;font-size:7.4px;color:#000;letter-spacing:-0.678px;">47 MB</span>
<span class="t" style="left:501px;top:449.99px;height:9.62px;line-height:9.62px;font-size:7.4px;color:#000;letter-spacing:-0.372px;">123,90</span>
<span class="t" style="left:551px;top:449.99px;height:9.62px;line-height:9.62px;font-size:7.4px;color:#000;letter-spacing:-0.262px;">13, 80</span>
<span class="t" style="left:604px;top:449.99px;height:9.62px;line-height:9.62px;font-size:7.4px;color:#000;letter-spacing:-0.380px;">214x65</span>
<svg style="left:0;top:0" width="640" height="459" viewBox="0 0 640 459"><circle cx="441.6" cy="454.2" r="3.6" fill="#E9B820" stroke="#A87C0C" stroke-width=".6"/><circle cx="441.6" cy="454.2" r="1.1" fill="#F6F2E0"/><ellipse cx="493.6" cy="454.6" rx="3.6" ry="2.2" fill="#C8C8E0" stroke="#8C8CB4" stroke-width=".6" transform="rotate(-20 493.6 454.6)"/><rect x="542" y="451" width="6.6" height="6.6" fill="#F4F6FC" stroke="#2E5AC0" stroke-width=".8"/><rect x="543.4" y="453" width="3.8" height="3" fill="#3E7AE4"/><rect x="593.6" y="451" width="7" height="6.6" fill="#F6E6A8" stroke="#6A6A8C" stroke-width=".8"/><path d="M595 452.4 l4.2 3.8 M599.2 452.4 l-4.2 3.8" stroke="#4A5AA0" stroke-width=".6"/><rect x="434.6" y="450" width=".6" height="8.4" fill="#D6D2C0"/><rect x="435.20000000000005" y="450" width=".6" height="8.4" fill="#FDFCF8"/><rect x="486" y="450" width=".6" height="8.4" fill="#D6D2C0"/><rect x="486.6" y="450" width=".6" height="8.4" fill="#FDFCF8"/><rect x="536.6" y="450" width=".6" height="8.4" fill="#D6D2C0"/><rect x="537.2" y="450" width=".6" height="8.4" fill="#FDFCF8"/><rect x="588" y="450" width=".6" height="8.4" fill="#D6D2C0"/><rect x="588.6" y="450" width=".6" height="8.4" fill="#FDFCF8"/></svg>
</body></html>
